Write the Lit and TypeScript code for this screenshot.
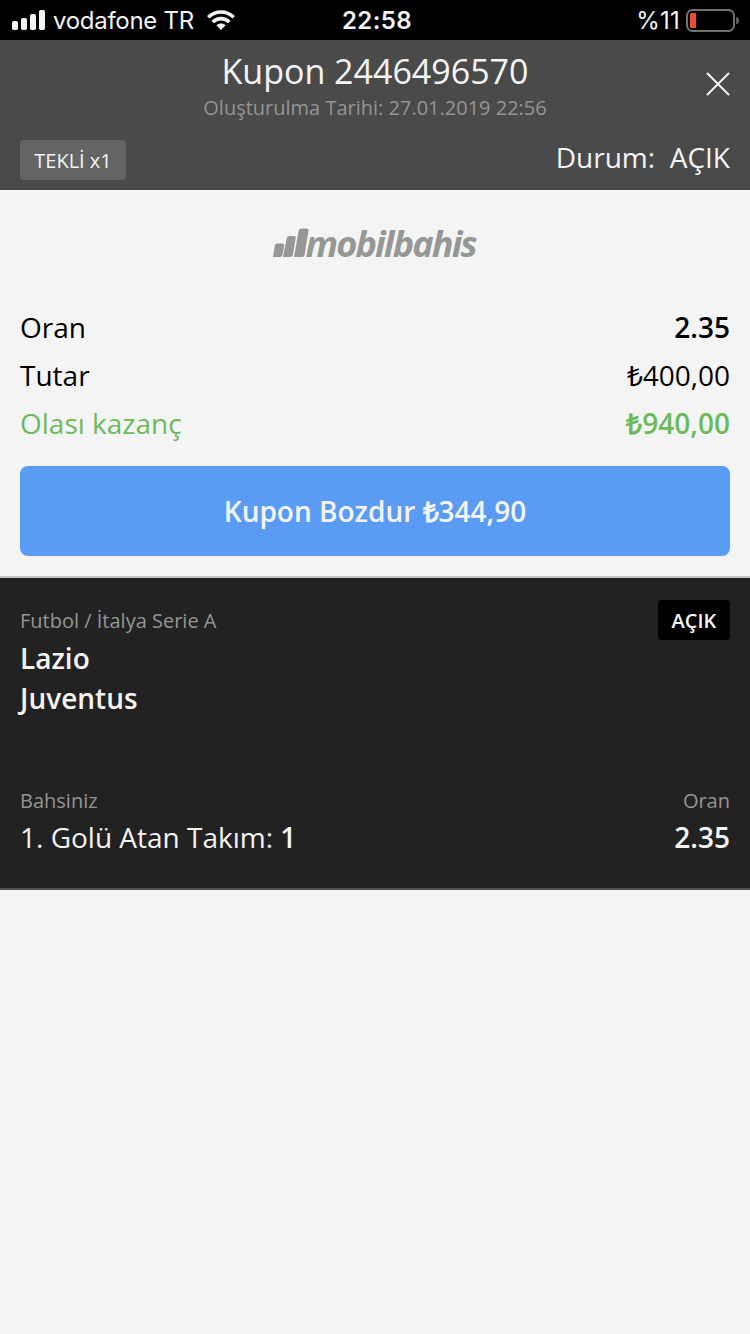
import { LitElement, html, css } from "lit";
import { customElement } from "lit/decorators.js";

@customElement("status-bar")
class StatusBar extends LitElement {
  static styles = css`
    :host { display: flex; height: 40px; background: #000; color: #f4f4f4; font: 24px/42px Inter, sans-serif; white-space: nowrap; }
    .side { flex: 1; display: flex; align-items: center; height: 40px; }
    .left { padding-left: 12px; }
    .right { justify-content: flex-end; padding-right: 10px; }
    .signal { margin-right: 7px; }
    .wifi { margin-left: 13px; }
    .battery { margin-left: 6px; }
    .time { font-weight: 600; letter-spacing: 0.4px; padding-left: 2px; }
    .carrier { letter-spacing: -0.28px; padding-top: 2px; }
    .percent { letter-spacing: 0.2px; padding-top: 2px; }
    svg { display: block; }
  `;
  render() {
    return html`
      <div class="side left">
        <svg class="signal" width="34" height="20" viewBox="0 0 34 20" fill="#f4f4f4">
          <rect x="0" y="11" width="6" height="9" rx="1.8" /><rect x="9" y="8" width="6" height="12" rx="1.8" />
          <rect x="18" y="4" width="6" height="16" rx="1.8" /><rect x="27" y="0" width="6" height="20" rx="1.8" />
        </svg>
        <span class="carrier">vodafone TR</span>
        <svg class="wifi" width="28" height="20" viewBox="0 0 28 20">
          <g fill="none" stroke="#f4f4f4" stroke-width="3.6">
            <path d="M1.2 7.3C8.5.2 19.5.2 26.8 7.3" /><path d="M5.7 12C10.4 7.5 17.6 7.5 22.3 12" />
          </g>
          <path d="M14 20l-4.6-4.7c2.6-2.3 6.6-2.3 9.2 0z" fill="#f4f4f4" />
        </svg>
      </div>
      <div class="time">22:58</div>
      <div class="side right">
        <span class="percent">%11</span>
        <svg class="battery" width="54" height="24" viewBox="0 0 54 24">
          <rect x="1" y="2" width="47" height="21" rx="5.5" fill="none" stroke="#707070" stroke-width="2" />
          <path d="M4 6.500Q4 5 5.500 5H10V20H5.500Q4 20 4 18.500z" fill="#ee4b38" />
          <path d="M50.300 8.500Q53 9.500 53 12.500T50.300 16.500z" fill="#707070" />
        </svg>
      </div>`;
  }
}

@customElement("coupon-header")
class CouponHeader extends LitElement {
  static styles = css`
    :host { display: grid; grid-template-columns: 1fr auto 1fr; grid-template-rows: 92px 58px; box-sizing: border-box; height: 150px; padding: 0 20px; background: #4a4a4a; color: #f4f4f4; }
    .heading { grid-column: 2; text-align: center; white-space: nowrap; }
    .title { font-size: 34px; line-height: 50px; padding-top: 6px; }
    .date { font-size: 20px; line-height: 26px; color: #949494; margin-top: -1px; }
    .close { justify-self: end; margin-top: 32px; }
    .tag { grid-row: 2; grid-column: 1; justify-self: start; box-sizing: border-box; width: 106px; height: 40px; margin-top: 8px; border-radius: 4px; background: #646464; font-size: 20px; line-height: 41px; text-align: center; white-space: nowrap; }
    .status { grid-row: 2; grid-column: 2 / 4; justify-self: end; font-size: 28px; line-height: 38px; margin-top: 6px; white-space: pre; }
  `;
  render() {
    return html`
      <div class="heading">
        <div class="title">Kupon 2446496570</div>
        <div class="date">Oluşturulma Tarihi: 27.01.2019 22:56</div>
      </div>
      <svg class="close" width="24" height="24" viewBox="0 0 24 24"><path d="M1.500 1.500l21 21M22.500 1.500l-21 21" stroke="#f4f4f4" stroke-width="2" stroke-linecap="round" /></svg>
      <div class="tag">TEKLİ x1</div>
      <div class="status">Durum:  AÇIK</div>`;
  }
}

@customElement("coupon-summary")
class CouponSummary extends LitElement {
  static styles = css`
    :host { display: block; box-sizing: border-box; height: 388px; padding: 37px 20px 0; border-bottom: 2px solid #c4c4c4; background: #f4f4f4; color: #000; }
    .logo { display: block; margin: 0 auto 40px; overflow: visible; }
    .logo text { font: italic 700 36px "Open Sans", sans-serif; }
    .row { display: flex; justify-content: space-between; font-size: 28px; line-height: 48px; }
    .strong { font-weight: 600; }
    .win { color: #6dba5d; }
    .cashout { height: 90px; margin-top: 19px; border-radius: 8px; background: #5a9cf3; color: #f4f4f4; font-size: 28px; font-weight: 600; line-height: 90px; text-align: center; }
  `;
  render() {
    return html`
      <svg class="logo" width="208" height="36" viewBox="0 0 208 36" fill="#959895">
        <path d="M6 16.500h5.500q2 0 1.700 2L11.500 28Q11 30 9 30H2L3.800 18.500Q4.200 16.500 6 16.500z" />
        <path d="M18.200 9h4.800q2 0 1.700 2L21.900 28Q21.500 30 19.500 30H12L15.800 11Q16.300 9 18.200 9z" />
        <path d="M30.500 1.500h5.300q2 0 1.700 2L33.600 28Q33.200 30 31.200 30H23L27.700 3.500Q28.200 1.500 30.500 1.500z" />
        <text x="34.500" y="29.500" textLength="172" lengthAdjust="spacing">mobilbahis</text>
      </svg>
      <div class="row"><span>Oran</span><span class="strong">2.35</span></div>
      <div class="row"><span>Tutar</span><span>₺400,00</span></div>
      <div class="row win"><span>Olası kazanç</span><span class="strong">₺940,00</span></div>
      <div class="cashout">Kupon Bozdur ₺344,90</div>`;
  }
}

@customElement("bet-card")
class BetCard extends LitElement {
  static styles = css`
    :host { display: block; box-sizing: border-box; height: 312px; padding: 22px 20px 0; background: #222; color: #f4f4f4; border-bottom: 2px solid #505050; font-size: 28px; }
    .line { display: flex; justify-content: space-between; line-height: 40px; }
    .small { font-size: 20px; color: #949494; line-height: 42px; height: 40px; }
    .badge { width: 72px; height: 40px; border-radius: 4px; background: #000; color: #f4f4f4; font-weight: 600; text-align: center; line-height: 41px; }
    .team, b { font-weight: 600; }
    .teams { margin-top: -2px; line-height: 40px; }
    .labels { margin-top: 62px; }
    .pick { margin-top: -3px; }
  `;
  render() {
    return html`
      <div class="line small"><span>Futbol / İtalya Serie A</span><span class="badge">AÇIK</span></div>
      <div class="teams"><div class="team">Lazio</div><div class="team">Juventus</div></div>
      <div class="line small labels"><span>Bahsiniz</span><span>Oran</span></div>
      <div class="line pick"><span>1. Golü Atan Takım: <b>1</b></span><b>2.35</b></div>`;
  }
}

@customElement("app-root")
class AppRoot extends LitElement {
  static styles = css`
    :host { display: block; min-height: 1334px; background: #f4f4f4; font-family: "Open Sans", sans-serif; }
  `;
  render() {
    return html`<status-bar></status-bar><coupon-header></coupon-header><coupon-summary></coupon-summary><bet-card></bet-card>`;
  }
}
